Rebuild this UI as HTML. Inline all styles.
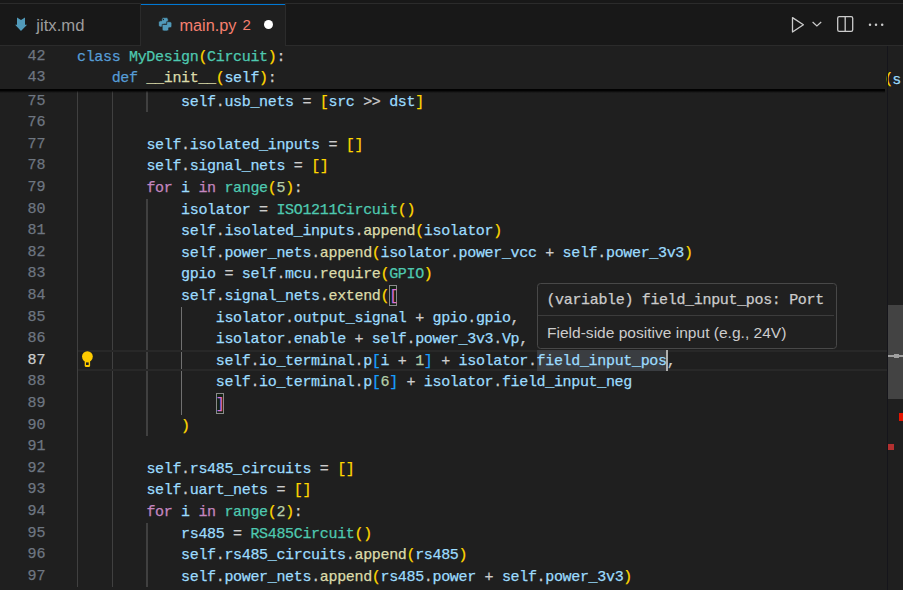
<!DOCTYPE html>
<html><head><meta charset="utf-8">
<style>
*{margin:0;padding:0;box-sizing:border-box}
html,body{width:903px;height:590px;overflow:hidden;background:#1f1f1f}
body{position:relative;font-family:"Liberation Sans",sans-serif}
.abs{position:absolute}
#top{position:absolute;left:0;top:0;width:903px;height:3px;background:#181818}
#tabs{position:absolute;left:0;top:3px;width:903px;height:42.7px;background:#181818;border-top:1.2px solid #2b2b2b;border-bottom:1.2px solid #2b2b2b}
.tab{position:absolute;top:3px;height:42.7px}
#tab1{left:0;width:141px;height:42.6px !important;background:#181818;border-right:1.2px solid #2b2b2b;border-top:1.2px solid #2b2b2b;border-bottom:1.4px solid #2b2b2b}
#tab2{left:141px;width:145px;background:#1f1f1f;border-right:1.2px solid #2b2b2b;}
#tab2top{position:absolute;left:141px;top:3.8px;width:144px;height:1.4px;background:#0078d4}
.tabtxt{position:absolute;font-size:16.3px;white-space:pre;line-height:20px}
.ln{position:absolute;left:0;width:45.6px;text-align:right;font-family:"Liberation Mono",monospace;font-size:15.0px;line-height:21.6px;height:21.6px;color:#6e7681;white-space:pre}
.ln.act{color:#cccccc}
.cl{position:absolute;left:77.0px;font-family:"Liberation Mono",monospace;font-size:15.0px;letter-spacing:-0.331px;line-height:21.6px;height:21.6px;color:#cccccc;white-space:pre}
.cl,.ln{-webkit-text-stroke:0.25px currentColor}
.k{color:#569cd6} .c{color:#c586c0} .t{color:#4ec9b0} .f{color:#dcdcaa} .v{color:#9cdcfe} .n{color:#b5cea8} .o{color:#cccccc}
.b1{color:#ffd700} .b2{color:#da70d6} .b3{color:#179fff}
.ig{position:absolute;width:1.2px;background:#404040}
.iga{background:#707070}
#sticky{position:absolute;left:0;top:45.7px;width:885px;height:43.2px;background:#1f1f1f}
#stshadow{position:absolute;left:0;top:88.9px;width:885px;height:4.2px;background:linear-gradient(rgba(0,0,0,1) 0%,rgba(0,0,0,.9) 40%,rgba(0,0,0,0) 100%)}
#vsb{position:absolute;left:887px;top:45.7px;width:1.2px;height:545px;background:#15151b}
</style></head><body>
<div id="top"></div>
<div id="tabs"></div>
<div class="tab" id="tab1"></div>
<div class="tab" id="tab2"></div>
<div id="tab2top"></div>
<svg class="abs" style="left:0;top:0" width="40" height="40" viewBox="0 0 40 40"><path d="M17 17.6 L21 19.9 L25 17.6 L25 24.8 L27.1 24.8 L21 31.1 L15.1 24.8 L17 24.8 Z" fill="#519aba"/></svg>
<div class="tabtxt" style="left:36.3px;top:16.1px;font-size:16.7px;color:#9d9d9d">jitx.md</div>
<svg class="abs" style="left:150px;top:12px" width="30" height="24" viewBox="150 12 30 24"><g fill="#519aba" stroke="#1f1f1f" stroke-width="0.7" stroke-linejoin="round"><path d="M163.4 17.6H166.5Q168.2 17.6 168.2 19.3V24.2H163.7V26.9H160.3Q158.6 26.9 158.6 25.2V22.5Q158.6 20.8 160.3 20.8H161.7V19.3Q161.7 17.6 163.4 17.6Z"/><path d="M167 31H163.9Q162.2 31 162.2 29.3V24.4H166.7V21.7H170.1Q171.8 21.7 171.8 23.4V26.1Q171.8 27.8 170.1 27.8H168.7V29.3Q168.7 31 167 31Z"/></g><circle cx="163.4" cy="19.5" r="0.65" fill="#1f1f1f"/></svg>
<div class="tabtxt" style="left:179.5px;top:15px;color:#f88070">main.py</div><div class="tabtxt" style="left:242.5px;top:15.4px;font-size:15px;color:#f88070">2</div>
<div class="abs" style="left:263.8px;top:19.9px;width:9.4px;height:9.4px;border-radius:50%;background:#ffffff"></div>
<!-- actions -->
<svg class="abs" style="left:788px;top:14px" width="100" height="22" viewBox="0 0 100 22">
 <path d="M4.5 3.6 L15.4 10.8 L4.5 18.0 Z" fill="none" stroke="#cccccc" stroke-width="1.3" stroke-linejoin="round"/>
 <path d="M24.6 8 L28.9 12 L33.2 8" fill="none" stroke="#cccccc" stroke-width="1.2"/>
 <rect x="49.7" y="2.6" width="15.0" height="14.7" rx="1.6" fill="none" stroke="#cccccc" stroke-width="1.3"/>
 <line x1="57.2" y1="2.6" x2="57.2" y2="17.3" stroke="#cccccc" stroke-width="1.3"/>
 <circle cx="82" cy="10.8" r="1.25" fill="#cccccc"/><circle cx="88" cy="10.8" r="1.25" fill="#cccccc"/><circle cx="94.2" cy="10.8" r="1.25" fill="#cccccc"/>
</svg>
<!-- editor -->
<div class="ig" style="left:77.00px;top:90.60px;height:496.80px"></div><div class="ig" style="left:111.68px;top:90.60px;height:496.80px"></div><div class="ig" style="left:146.36px;top:90.60px;height:21.60px"></div><div class="ig" style="left:146.36px;top:198.60px;height:237.60px"></div><div class="ig" style="left:146.36px;top:522.60px;height:64.80px"></div><div class="ig iga" style="left:181.04px;top:306.60px;height:108.00px"></div>
<div class="abs" style="left:77.5px;top:349.80px;width:826px;height:21.60px;border-top:2px solid #282828;border-bottom:2px solid #282828"></div>
<div class="abs" style="left:537px;top:349.80px;width:129.2px;height:21.60px;background:#3a3d41"></div>
<div class="abs" style="left:389px;top:285.00px;width:8.2px;height:20.9px;background:#152215;border:1.2px solid #8a8a8a"></div>
<div class="abs" style="left:215.7px;top:393.00px;width:8.2px;height:20.9px;background:#152215;border:1.2px solid #8a8a8a"></div>
<div class="ln" style="top:90.60px">75</div><div class="cl" style="top:91.60px">            <span class="v">self</span><span class="o">.</span><span class="v">usb_nets</span><span class="o"> = </span><span class="b1">[</span><span class="v">src</span><span class="o"> &gt;&gt; </span><span class="v">dst</span><span class="b1">]</span></div><div class="ln" style="top:112.20px">76</div><div class="ln" style="top:133.80px">77</div><div class="cl" style="top:134.80px">        <span class="v">self</span><span class="o">.</span><span class="v">isolated_inputs</span><span class="o"> = </span><span class="b1">[]</span></div><div class="ln" style="top:155.40px">78</div><div class="cl" style="top:156.40px">        <span class="v">self</span><span class="o">.</span><span class="v">signal_nets</span><span class="o"> = </span><span class="b1">[]</span></div><div class="ln" style="top:177.00px">79</div><div class="cl" style="top:178.00px">        <span class="c">for</span><span class="o"> </span><span class="v">i</span><span class="o"> </span><span class="c">in</span><span class="o"> </span><span class="t">range</span><span class="b1">(</span><span class="n">5</span><span class="b1">)</span><span class="o">:</span></div><div class="ln" style="top:198.60px">80</div><div class="cl" style="top:199.60px">            <span class="v">isolator</span><span class="o"> = </span><span class="t">ISO1211Circuit</span><span class="b1">()</span></div><div class="ln" style="top:220.20px">81</div><div class="cl" style="top:221.20px">            <span class="v">self</span><span class="o">.</span><span class="v">isolated_inputs</span><span class="o">.</span><span class="f">append</span><span class="b1">(</span><span class="v">isolator</span><span class="b1">)</span></div><div class="ln" style="top:241.80px">82</div><div class="cl" style="top:242.80px">            <span class="v">self</span><span class="o">.</span><span class="v">power_nets</span><span class="o">.</span><span class="f">append</span><span class="b1">(</span><span class="v">isolator</span><span class="o">.</span><span class="v">power_vcc</span><span class="o"> + </span><span class="v">self</span><span class="o">.</span><span class="v">power_3v3</span><span class="b1">)</span></div><div class="ln" style="top:263.40px">83</div><div class="cl" style="top:264.40px">            <span class="v">gpio</span><span class="o"> = </span><span class="v">self</span><span class="o">.</span><span class="v">mcu</span><span class="o">.</span><span class="f">require</span><span class="b1">(</span><span class="t">GPIO</span><span class="b1">)</span></div><div class="ln" style="top:285.00px">84</div><div class="cl" style="top:286.00px">            <span class="v">self</span><span class="o">.</span><span class="v">signal_nets</span><span class="o">.</span><span class="f">extend</span><span class="b1">(</span><span class="b2">[</span></div><div class="ln" style="top:306.60px">85</div><div class="cl" style="top:307.60px">                <span class="v">isolator</span><span class="o">.</span><span class="v">output_signal</span><span class="o"> + </span><span class="v">gpio</span><span class="o">.</span><span class="v">gpio</span><span class="o">,</span></div><div class="ln" style="top:328.20px">86</div><div class="cl" style="top:329.20px">                <span class="v">isolator</span><span class="o">.</span><span class="v">enable</span><span class="o"> + </span><span class="v">self</span><span class="o">.</span><span class="v">power_3v3</span><span class="o">.</span><span class="v">Vp</span><span class="o">,</span></div><div class="ln act" style="top:349.80px">87</div><div class="cl" style="top:350.80px">                <span class="v">self</span><span class="o">.</span><span class="v">io_terminal</span><span class="o">.</span><span class="v">p</span><span class="b3">[</span><span class="v">i</span><span class="o"> + </span><span class="n">1</span><span class="b3">]</span><span class="o"> + </span><span class="v">isolator</span><span class="o">.</span><span class="v">field_input_pos</span><span class="o">,</span></div><div class="ln" style="top:371.40px">88</div><div class="cl" style="top:372.40px">                <span class="v">self</span><span class="o">.</span><span class="v">io_terminal</span><span class="o">.</span><span class="v">p</span><span class="b3">[</span><span class="n">6</span><span class="b3">]</span><span class="o"> + </span><span class="v">isolator</span><span class="o">.</span><span class="v">field_input_neg</span></div><div class="ln" style="top:393.00px">89</div><div class="cl" style="top:394.00px">                <span class="b2">]</span></div><div class="ln" style="top:414.60px">90</div><div class="cl" style="top:415.60px">            <span class="b1">)</span></div><div class="ln" style="top:436.20px">91</div><div class="ln" style="top:457.80px">92</div><div class="cl" style="top:458.80px">        <span class="v">self</span><span class="o">.</span><span class="v">rs485_circuits</span><span class="o"> = </span><span class="b1">[]</span></div><div class="ln" style="top:479.40px">93</div><div class="cl" style="top:480.40px">        <span class="v">self</span><span class="o">.</span><span class="v">uart_nets</span><span class="o"> = </span><span class="b1">[]</span></div><div class="ln" style="top:501.00px">94</div><div class="cl" style="top:502.00px">        <span class="c">for</span><span class="o"> </span><span class="v">i</span><span class="o"> </span><span class="c">in</span><span class="o"> </span><span class="t">range</span><span class="b1">(</span><span class="n">2</span><span class="b1">)</span><span class="o">:</span></div><div class="ln" style="top:522.60px">95</div><div class="cl" style="top:523.60px">            <span class="v">rs485</span><span class="o"> = </span><span class="t">RS485Circuit</span><span class="b1">()</span></div><div class="ln" style="top:544.20px">96</div><div class="cl" style="top:545.20px">            <span class="v">self</span><span class="o">.</span><span class="v">rs485_circuits</span><span class="o">.</span><span class="f">append</span><span class="b1">(</span><span class="v">rs485</span><span class="b1">)</span></div><div class="ln" style="top:565.80px">97</div><div class="cl" style="top:566.80px">            <span class="v">self</span><span class="o">.</span><span class="v">power_nets</span><span class="o">.</span><span class="f">append</span><span class="b1">(</span><span class="v">rs485</span><span class="o">.</span><span class="v">power</span><span class="o"> + </span><span class="v">self</span><span class="o">.</span><span class="v">power_3v3</span><span class="b1">)</span></div>
<div class="abs" style="left:665.9px;top:349.80px;width:2.2px;height:21.60px;background:#aeafad"></div>
<svg class="abs" style="left:80px;top:349.80px" width="16" height="20" viewBox="0 0 16 20"><circle cx="7.4" cy="6.6" r="5.4" fill="#ffcc00"/><path d="M4.7 9.5H10.1V15.8Q10.1 16.9 9 16.9H5.8Q4.7 16.9 4.7 15.8Z" fill="#ffcc00"/><rect x="6" y="12.4" width="2.7" height="2.6" fill="#1f1f1f"/></svg>
<!-- under-sticky text of line 74 -->
<div class="cl" style="left:884.21px;top:68.90px"><span class="b1">(</span></div><div class="cl" style="left:892.18px;top:69.90px"><span class="v">s</span></div>
<div id="sticky">
<div class="ln" style="top:0.00px">42</div><div class="cl" style="top:1.00px"><span class="k">class</span><span class="o"> </span><span class="t">MyDesign</span><span class="b1">(</span><span class="t">Circuit</span><span class="b1">)</span><span class="o">:</span></div><div class="ln" style="top:21.60px">43</div><div class="cl" style="top:22.60px">    <span class="k">def</span><span class="o"> </span><span class="f">__init__</span><span class="b1">(</span><span class="v">self</span><span class="b1">)</span><span class="o">:</span></div>
</div>
<div id="stshadow"></div>
<div id="vsb"></div>
<div class="abs" style="left:887.5px;top:305px;width:15.5px;height:94px;background:#434343"></div>
<div class="abs" style="left:888px;top:355.2px;width:15px;height:1.6px;background:#a0a0a0"></div>
<div class="abs" style="left:893.6px;top:353.8px;width:5px;height:4.5px;background:#a0a0a0"></div>
<div class="abs" style="left:899px;top:412.5px;width:4px;height:8px;background:#e51400"></div>
<div class="abs" style="left:888px;top:443.6px;width:5.6px;height:6.4px;background:#b23030"></div>
<!-- hover -->
<div class="abs" style="left:536.6px;top:283px;width:300px;height:66px;background:#202020;border:1px solid #484848;border-radius:3.6px"></div>
<div class="abs" style="left:537.6px;top:315px;width:296px;height:1.2px;background:#3c3c3c"></div>
<div class="cl" style="left:546.4px;top:290.2px;color:#cccccc">(variable) field_input_pos: Port</div>
<div class="abs" style="left:547px;top:323.6px;font-size:15.55px;line-height:18px;color:#cccccc;white-space:pre">Field-side positive input (e.g., 24V)</div>
</body></html>
